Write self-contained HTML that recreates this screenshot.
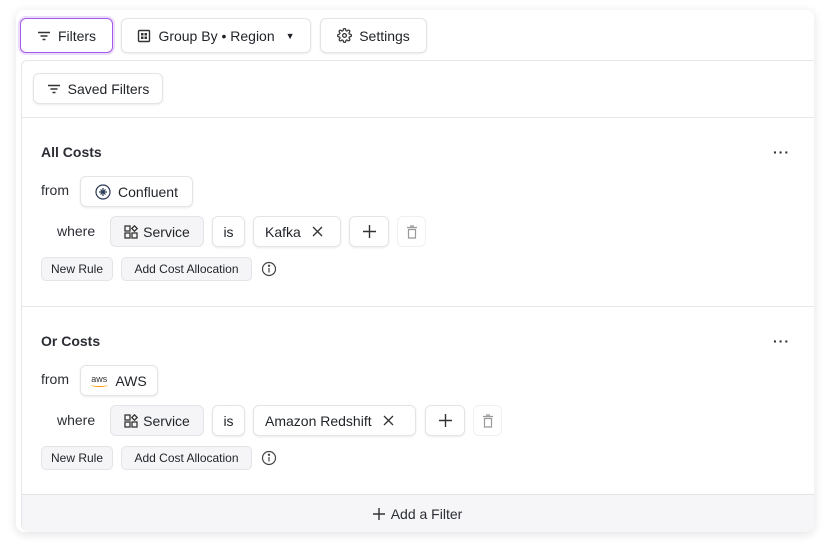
<!DOCTYPE html>
<html><head><style>
*{box-sizing:border-box;margin:0;padding:0}
body{width:830px;height:552px;background:#fff;font-family:"Liberation Sans",sans-serif;color:#1f2328;position:relative;overflow:hidden}
.a{position:absolute}
.btn{position:absolute;display:flex;align-items:center;justify-content:center;gap:7px;background:#fff;border:1px solid #e3e4e8;border-radius:6px;box-shadow:0 1px 2px rgba(0,0,0,.08);font-size:14px;color:#1f2328}
.gray{background:#f5f5f7}
.sm{font-size:12px;background:#f5f5f7;border:1px solid #e3e4e8;border-radius:5px;box-shadow:none}
.t{position:absolute;font-size:14px;color:#2a2d33}
.b{font-weight:bold;font-size:14px}
svg{display:block}
</style></head><body>
<div class="a" style="left:16px;top:10px;width:798px;height:522px;background:#fff;border-radius:8px;box-shadow:0 2px 10px rgba(0,0,0,.12)"></div>
<div class="a" style="left:21px;top:60px;width:793px;height:472px;border-top:1px solid #e6e6ea;border-left:1px solid #e6e6ea;border-radius:6px 0 8px 8px;background:#fff;overflow:hidden">
 <div class="a" style="left:0;right:0;top:56px;border-top:1px solid #e6e6ea"></div>
 <div class="a" style="left:0;right:0;top:245px;border-top:1px solid #e6e6ea"></div>
 <div class="a" style="left:0;right:0;top:433px;bottom:0;background:#f6f6f8;border-top:1px solid #e3e3e7"></div>
</div>
<div class="btn" style="left:20px;top:18px;width:93px;height:35px;border:1.5px solid #a45be8;box-shadow:0 0 0 2px #ecdcfb">
<svg width="14" height="14" viewBox="0 0 14 14"><path d="M1 3.5h12M3.5 7h7M5.5 10.5h3" stroke="#333" stroke-width="1.4"/></svg>Filters</div>
<div class="btn" style="left:121px;top:18px;width:190px;height:35px">
<svg width="14" height="14" viewBox="0 0 14 14"><rect x="1.5" y="1.5" width="11" height="11" rx="1" fill="none" stroke="#333" stroke-width="1.4"/><rect x="4" y="4" width="2.5" height="2.5" fill="#333"/><rect x="7.5" y="4" width="2.5" height="2.5" fill="#333"/><rect x="4" y="7.5" width="2.5" height="2.5" fill="#333"/><rect x="7.5" y="7.5" width="2.5" height="2.5" fill="#333"/></svg>Group By • Region <span style="font-size:9px;margin-left:4px">▼</span></div>
<div class="btn" style="left:320px;top:18px;width:107px;height:35px">
<svg width="15" height="15" viewBox="0 0 24 24" fill="none" stroke="#333" stroke-width="2"><circle cx="12" cy="12" r="3"/><path d="M19.4 15a1.7 1.7 0 0 0 .3 1.8l.1.1a2 2 0 1 1-2.8 2.8l-.1-.1a1.7 1.7 0 0 0-1.8-.3 1.7 1.7 0 0 0-1 1.5V21a2 2 0 1 1-4 0v-.1a1.7 1.7 0 0 0-1.100-1.5 1.7 1.7 0 0 0-1.8.3l-.1.1a2 2 0 1 1-2.8-2.8l.1-.1a1.7 1.7 0 0 0 .3-1.8 1.7 1.7 0 0 0-1.5-1H3a2 2 0 1 1 0-4h.1a1.7 1.7 0 0 0 1.5-1.1 1.7 1.7 0 0 0-.3-1.8l-.1-.1a2 2 0 1 1 2.8-2.8l.1.1a1.7 1.7 0 0 0 1.8.3H9a1.7 1.7 0 0 0 1-1.5V3a2 2 0 1 1 4 0v.1a1.7 1.7 0 0 0 1 1.5 1.7 1.7 0 0 0 1.8-.3l.1-.1a2 2 0 1 1 2.8 2.8l-.1.1a1.7 1.7 0 0 0-.3 1.8V9a1.7 1.7 0 0 0 1.5 1H21a2 2 0 1 1 0 4h-.1a1.7 1.7 0 0 0-1.5 1z"/></svg>Settings</div>
<div class="btn" style="left:33px;top:73px;width:130px;height:31px">
<svg width="14" height="14" viewBox="0 0 14 14"><path d="M1 3.5h12M3.5 7h7M5.5 10.5h3" stroke="#333" stroke-width="1.4"/></svg>Saved Filters</div>

<!-- section 1 -->
<div class="t b" style="left:41px;top:144px">All Costs</div>
<div class="t b" style="left:773px;top:144px;letter-spacing:1px">···</div>
<div class="t" style="left:41px;top:182px">from</div>
<div class="btn" style="left:80px;top:176px;width:113px;height:31px">
<svg width="16" height="16" viewBox="0 0 16 16" fill="none" stroke="#2b3a55" stroke-width="1.2"><circle cx="8" cy="8" r="7"/><path d="M8 4v8M4 8h8M5.5 5.5l5 5M5.5 10.5l5-5"/></svg>Confluent</div>
<div class="t" style="left:57px;top:223px">where</div>
<div class="btn gray" style="left:110px;top:216px;width:94px;height:31px;box-shadow:none;gap:5px">
<svg width="14" height="14" viewBox="0 0 14 14" fill="none" stroke="#333" stroke-width="1.3"><rect x="1" y="1" width="5" height="5"/><rect x="1" y="8" width="5" height="5"/><rect x="8" y="8" width="5" height="5"/><path d="M10.5 0.8l2.7 2.7-2.7 2.7-2.7-2.7z"/></svg>Service</div>
<div class="btn" style="left:212px;top:216px;width:33px;height:31px">is</div>
<div class="btn" style="left:253px;top:216px;width:88px;height:31px;justify-content:flex-start;padding-left:11px;gap:11px">Kafka <svg width="11" height="11" viewBox="0 0 11 11"><path d="M1 1l9 9M10 1l-9 9" stroke="#333" stroke-width="1.3"/></svg></div>
<div class="btn" style="left:349px;top:216px;width:40px;height:31px"><svg width="13" height="13" viewBox="0 0 13 13"><path d="M6.5 0v13M0 6.5h13" stroke="#333" stroke-width="1.4"/></svg></div>
<div class="btn" style="left:397px;top:216px;width:29px;height:31px;border-color:#f0f0f2;box-shadow:none">
<svg width="12" height="14" viewBox="0 0 12 14" fill="none" stroke="#999" stroke-width="1.2"><path d="M1 2.5h10M4 1h4M2.5 4.5h7v8.5h-7z"/></svg></div>
<div class="btn sm" style="left:41px;top:257px;width:72px;height:24px">New Rule</div>
<div class="btn sm" style="left:121px;top:257px;width:131px;height:24px">Add Cost Allocation</div>
<svg class="a" style="left:261px;top:261px" width="16" height="16" viewBox="0 0 16 16" fill="none" stroke="#444" stroke-width="1.2"><circle cx="8" cy="8" r="6.5"/><path d="M8 7v4.5"/><circle cx="8" cy="4.8" r=".6" fill="#444"/></svg>

<!-- section 2 -->
<div class="t b" style="left:41px;top:333px">Or Costs</div>
<div class="t b" style="left:773px;top:333px;letter-spacing:1px">···</div>
<div class="t" style="left:41px;top:371px">from</div>
<div class="btn" style="left:80px;top:365px;width:78px;height:31px;gap:8px">
<span style="position:relative;font-size:9px;color:#333;top:-2px">aws<span style="position:absolute;left:0;top:9px;width:17px;height:4px;border-bottom:1.5px solid #f90;border-radius:0 0 50% 50%"></span></span>AWS</div>
<div class="t" style="left:57px;top:412px">where</div>
<div class="btn gray" style="left:110px;top:405px;width:94px;height:31px;box-shadow:none;gap:5px">
<svg width="14" height="14" viewBox="0 0 14 14" fill="none" stroke="#333" stroke-width="1.3"><rect x="1" y="1" width="5" height="5"/><rect x="1" y="8" width="5" height="5"/><rect x="8" y="8" width="5" height="5"/><path d="M10.5 0.8l2.7 2.7-2.7 2.7-2.7-2.7z"/></svg>Service</div>
<div class="btn" style="left:212px;top:405px;width:33px;height:31px">is</div>
<div class="btn" style="left:253px;top:405px;width:163px;height:31px;justify-content:flex-start;padding-left:11px;gap:11px">Amazon Redshift <svg width="11" height="11" viewBox="0 0 11 11"><path d="M1 1l9 9M10 1l-9 9" stroke="#333" stroke-width="1.3"/></svg></div>
<div class="btn" style="left:425px;top:405px;width:40px;height:31px"><svg width="13" height="13" viewBox="0 0 13 13"><path d="M6.5 0v13M0 6.5h13" stroke="#333" stroke-width="1.4"/></svg></div>
<div class="btn" style="left:473px;top:405px;width:29px;height:31px;border-color:#f0f0f2;box-shadow:none">
<svg width="12" height="14" viewBox="0 0 12 14" fill="none" stroke="#999" stroke-width="1.2"><path d="M1 2.5h10M4 1h4M2.5 4.5h7v8.5h-7z"/></svg></div>
<div class="btn sm" style="left:41px;top:446px;width:72px;height:24px">New Rule</div>
<div class="btn sm" style="left:121px;top:446px;width:131px;height:24px">Add Cost Allocation</div>
<svg class="a" style="left:261px;top:450px" width="16" height="16" viewBox="0 0 16 16" fill="none" stroke="#444" stroke-width="1.2"><circle cx="8" cy="8" r="6.5"/><path d="M8 7v4.5"/><circle cx="8" cy="4.8" r=".6" fill="#444"/></svg>

<div class="a" style="left:21px;width:793px;top:506px;display:flex;justify-content:center;align-items:center;gap:6px;font-size:14px;color:#2a2d33"><svg width="12" height="12" viewBox="0 0 12 12"><path d="M6 0v12M0 6h12" stroke="#333" stroke-width="1.4"/></svg>Add a Filter</div>
</body></html>
